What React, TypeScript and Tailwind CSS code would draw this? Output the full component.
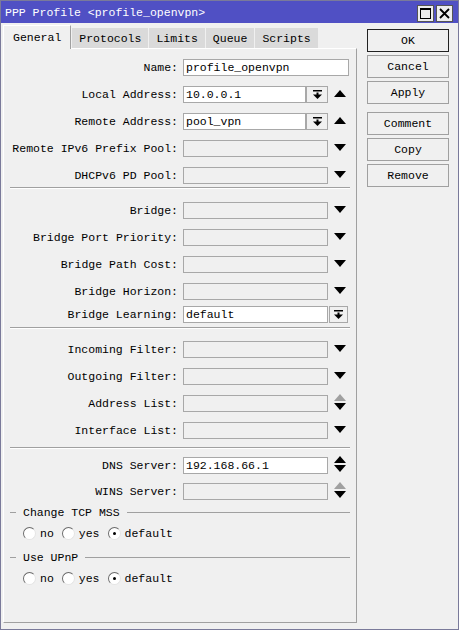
import { FC, ReactNode } from 'react';

type Tail = 'up' | 'down' | 'both' | 'dual' | 'none';

const Tri: FC<{ dir: 'up' | 'down'; color?: string }> = ({ dir, color = '#000' }) => (
  <svg width="12" height="7" viewBox="0 0 12 7">
    <polygon points={dir === 'up' ? '6,0 12,7 0,7' : '0,0 12,0 6,7'} fill={color} />
  </svg>
);

const TailIcon: FC<{ kind: Tail }> = ({ kind }) => {
  if (kind === 'none') return null;
  return (
    <div className="mb-[3px] ml-[5px] flex w-[13px] flex-col items-center gap-[2px]">
      {kind === 'up' && <Tri dir="up" />}
      {kind === 'down' && <Tri dir="down" />}
      {kind === 'both' && (
        <>
          <Tri dir="up" />
          <Tri dir="down" />
        </>
      )}
      {kind === 'dual' && (
        <>
          <Tri dir="up" color="#a0a0a0" />
          <Tri dir="down" />
        </>
      )}
    </div>
  );
};

const Field: FC<{ w: string; value?: string }> = ({ w, value }) => (
  <div
    className={`${w} h-[17px] shrink-0 border border-[#a8a8a8] px-[2px] leading-[15px] ${
      value !== undefined ? 'bg-white' : 'bg-[#f0f0f0]'
    }`}
  >
    {value}
  </div>
);

const DropBtn: FC<{ className: string }> = ({ className }) => (
  <div className={`${className} flex h-[17px] items-center justify-center border border-[#a8a8a8] bg-[#f0f0f0]`}>
    <svg width="9" height="9" viewBox="0 0 9 9">
      <rect x="0" y="0" width="9" height="1.5" fill="#000" />
      <rect x="3.5" y="2.5" width="2" height="2.5" fill="#000" />
      <polygon points="0,4.5 9,4.5 4.5,9" fill="#000" />
    </svg>
  </div>
);

const Row: FC<{ label: string; className?: string; children: ReactNode }> = ({
  label,
  className = 'h-[27px]',
  children,
}) => (
  <div className={`flex items-center ${className}`}>
    <span className="w-[174px] shrink-0 text-right">{label}:</span>
    <div className="ml-[5px] flex items-center">{children}</div>
  </div>
);

const Sep: FC<{ className: string }> = ({ className }) => (
  <div className={`mx-[6px] h-[2px] border-t border-b border-t-[#a0a0a0] border-b-white ${className}`} />
);

const Group: FC<{ title: string; className: string }> = ({ title, className }) => (
  <div className={`flex items-center px-[6px] ${className}`}>
    <div className="h-px w-[6px] bg-[#a0a0a0]" />
    <span className="px-[7px]">{title}</span>
    <div className="h-px flex-1 bg-[#a0a0a0]" />
  </div>
);

const Radio: FC<{ label: string; checked?: boolean }> = ({ label, checked }) => (
  <div className="flex items-center">
    <span className="flex h-[13px] w-[13px] items-center justify-center rounded-full border border-t-[#6a6a6a] border-l-[#6a6a6a] border-r-[#e4e4e4] border-b-[#e4e4e4] bg-white">
      {checked && <span className="h-[3px] w-[3px] rounded-full bg-black" />}
    </span>
    <span className="ml-[4px]">{label}</span>
  </div>
);

const Radios: FC<{ className: string }> = ({ className }) => (
  <div className={`flex items-center gap-[8px] pl-[19px] ${className}`}>
    <Radio label="no" />
    <Radio label="yes" />
    <Radio label="default" checked />
  </div>
);

const Btn: FC<{ label: string; main?: boolean; className?: string }> = ({ label, main, className = '' }) => (
  <div
    className={`flex h-[23px] items-center justify-center border bg-[#f0f0f0] ${
      main ? 'border-[#222]' : 'border-[#a0a0a0]'
    } ${className}`}
  >
    {label}
  </div>
);

const tabs = ['Protocols', 'Limits', 'Queue', 'Scripts'];

const App: FC = () => {
  return (
    <div className="flex h-[630px] w-[459px] flex-col border border-[#7a7a9a] bg-[#f0f0f0] font-['Liberation_Mono',monospace] text-[11.5px] leading-[15px] text-black">
      {/* title bar */}
      <div className="flex h-[22px] shrink-0 items-center justify-between bg-[#5050c4] pl-[4px] pr-[5px]">
        <span className="text-white">PPP Profile &lt;profile_openvpn&gt;</span>
        <div className="mt-[2px] flex gap-[2px]">
          <div className="flex h-[17px] w-[17px] items-center justify-center border border-[#555] bg-[#ededed]">
            <div className="h-[11px] w-[11px] border border-t-2 border-black" />
          </div>
          <div className="flex h-[17px] w-[17px] items-center justify-center border border-[#555] bg-[#ededed]">
            <svg width="11" height="11" viewBox="0 0 11 11">
              <path d="M1 1 L10 10 M10 1 L1 10" stroke="#000" strokeWidth="1.8" />
            </svg>
          </div>
        </div>
      </div>

      <div className="flex flex-1 pb-[6px] pl-[2px] pt-[1px]">
        {/* tabs + panel */}
        <div className="flex w-[354px] flex-col">
          <div className="flex h-[24px] items-end gap-px">
            <div className="relative z-10 -mb-px flex h-[24px] items-center border-t border-l border-r border-t-white border-l-white border-r-[#a0a0a0] bg-[#f0f0f0] px-[9px]">
              General
            </div>
            {tabs.map((t) => (
              <div key={t} className="flex h-[20px] items-center bg-[#dadada] px-[7px]">
                {t}
              </div>
            ))}
          </div>

          <div className="flex flex-1 flex-col border border-t-white border-l-white border-r-[#a0a0a0] border-b-[#a0a0a0] pt-[5px]">
            <Row label="Name">
              <Field w="w-[166px]" value="profile_openvpn" />
            </Row>
            <Row label="Local Address">
              <Field w="w-[123px]" value="10.0.0.1" />
              <DropBtn className="w-[22px]" />
              <TailIcon kind="up" />
            </Row>
            <Row label="Remote Address">
              <Field w="w-[123px]" value="pool_vpn" />
              <DropBtn className="w-[22px]" />
              <TailIcon kind="up" />
            </Row>
            <Row label="Remote IPv6 Prefix Pool">
              <Field w="w-[145px]" />
              <TailIcon kind="down" />
            </Row>
            <Row label="DHCPv6 PD Pool">
              <Field w="w-[145px]" />
              <TailIcon kind="down" />
            </Row>

            <Sep className="-mt-[2px] mb-[8px]" />

            <Row label="Bridge">
              <Field w="w-[145px]" />
              <TailIcon kind="down" />
            </Row>
            <Row label="Bridge Port Priority">
              <Field w="w-[145px]" />
              <TailIcon kind="down" />
            </Row>
            <Row label="Bridge Path Cost">
              <Field w="w-[145px]" />
              <TailIcon kind="down" />
            </Row>
            <Row label="Bridge Horizon">
              <Field w="w-[145px]" />
              <TailIcon kind="down" />
            </Row>
            <Row label="Bridge Learning" className="h-[19px]">
              <Field w="w-[145px]" value="default" />
              <DropBtn className="ml-px w-[19px]" />
            </Row>

            <Sep className="mt-[3px] mb-[7px]" />

            <Row label="Incoming Filter">
              <Field w="w-[145px]" />
              <TailIcon kind="down" />
            </Row>
            <Row label="Outgoing Filter">
              <Field w="w-[145px]" />
              <TailIcon kind="down" />
            </Row>
            <Row label="Address List">
              <Field w="w-[145px]" />
              <TailIcon kind="dual" />
            </Row>
            <Row label="Interface List">
              <Field w="w-[145px]" />
              <TailIcon kind="down" />
            </Row>

            <Sep className="mt-[3px] mb-[3px]" />

            <Row label="DNS Server" className="h-[26px]">
              <Field w="w-[145px]" value="192.168.66.1" />
              <TailIcon kind="both" />
            </Row>
            <Row label="WINS Server" className="h-[26px]">
              <Field w="w-[145px]" />
              <TailIcon kind="dual" />
            </Row>

            <Group title="Change TCP MSS" className="h-[16px]" />
            <Radios className="h-[26px]" />
            <Group title="Use UPnP" className="h-[22px]" />
            <Radios className="h-[20px]" />
          </div>
        </div>

        {/* side buttons */}
        <div className="ml-[10px] flex w-[82px] flex-col gap-[3px] pt-[5px]">
          <Btn label="OK" main />
          <Btn label="Cancel" />
          <Btn label="Apply" />
          <Btn label="Comment" className="mt-[5px]" />
          <Btn label="Copy" />
          <Btn label="Remove" />
        </div>
      </div>
    </div>
  );
};

export default App;
